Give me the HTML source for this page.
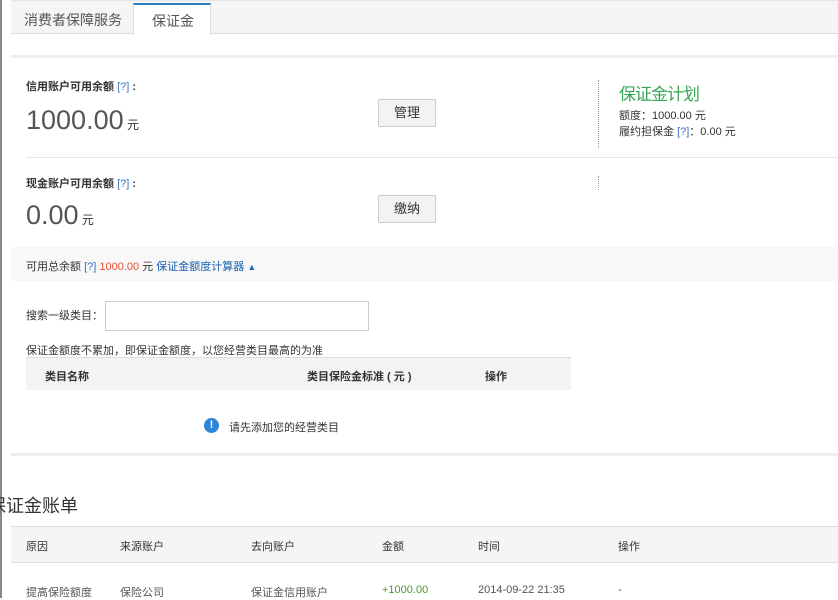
<!DOCTYPE html>
<html><head><meta charset="utf-8"><style>
*{margin:0;padding:0;box-sizing:border-box}
body{width:838px;height:598px;overflow:hidden;background:#fff;font-family:"Liberation Sans","Noto Sans CJK SC",sans-serif;font-size:12px;color:#333;position:relative}
.a{position:absolute;white-space:nowrap}
.q{color:#3a6fc4}
.btn{position:absolute;width:58px;height:28px;border:1px solid #ccc;background:#f3f3f3;border-radius:2px;text-align:center;line-height:26px;font-size:13px;color:#333}
.lbl{font-weight:bold;font-size:11px}
</style></head><body>
<div class="a" style="left:0;top:0;width:2px;height:598px;background:#888"></div>
<div class="a" style="left:11px;top:0;width:827px;height:34px;background:#f5f5f5;border-bottom:1px solid #ddd;border-top:1px solid #e5e5e5"></div>
<div class="a" style="left:24px;top:10px;font-size:14px;color:#555">消费者保障服务</div>
<div class="a" style="left:133px;top:3px;width:78px;height:32px;background:#fff;border-top:2px solid #2d7fc1;border-left:1px solid #ddd;border-right:1px solid #ddd"></div>
<div class="a" style="left:152px;top:11px;font-size:14px;color:#555">保证金</div>
<div class="a" style="left:11px;top:55px;width:827px;height:3px;background:#eee"></div>

<div class="a lbl" style="left:26px;top:78px">信用账户可用余额 <span class="q" style="font-weight:normal">[?]</span> :</div>
<div class="a" style="left:26px;top:105px;font-size:27px;color:#555">1000.00<span style="font-size:12px;color:#333"> 元</span></div>
<div class="btn" style="left:378px;top:99px">管理</div>
<div class="a" style="left:598px;top:80px;height:68px;border-left:1px dotted #999"></div>
<div class="a" style="left:619px;top:80px;font-size:17px;color:#3aa655;letter-spacing:-1px">保证金计划</div>
<div class="a" style="left:619px;top:107px;font-size:11px">额度：1000.00 元</div>
<div class="a" style="left:619px;top:123px;font-size:11px">履约担保金 <span class="q">[?]</span>：0.00 元</div>
<div class="a" style="left:26px;top:157px;width:812px;height:1px;background:#e5e5e5"></div>

<div class="a lbl" style="left:26px;top:175px">现金账户可用余额 <span class="q" style="font-weight:normal">[?]</span> :</div>
<div class="a" style="left:26px;top:200px;font-size:27px;color:#555">0.00<span style="font-size:12px;color:#333"> 元</span></div>
<div class="btn" style="left:378px;top:195px">缴纳</div>
<div class="a" style="left:598px;top:176px;height:14px;border-left:1px dotted #999"></div>

<div class="a" style="left:11px;top:247px;width:827px;height:34px;background:#f8f8f8"></div>
<div class="a" style="left:26px;top:258px;font-size:11px">可用总余额 <span class="q">[?]</span> <span style="color:#e4512f">1000.00</span> 元 <span style="color:#1a5fb4">保证金额度计算器</span> <span style="color:#1a6fc4;font-size:9px">▲</span></div>

<div class="a" style="left:26px;top:307px;font-size:11px">搜索一级类目：</div>
<div class="a" style="left:105px;top:301px;width:264px;height:30px;border:1px solid #ccc"></div>
<div class="a" style="left:26px;top:342px;font-size:11px">保证金额度不累加，即保证金额度，以您经营类目最高的为准</div>
<div class="a" style="left:26px;top:357px;width:545px;height:33px;background:#f3f3f3;border-top:1px solid #ddd"></div>
<div class="a lbl" style="left:45px;top:368px">类目名称</div>
<div class="a lbl" style="left:307px;top:368px">类目保险金标准 ( 元 )</div>
<div class="a lbl" style="left:485px;top:368px">操作</div>
<div class="a" style="left:204px;top:418px;width:15px;height:15px;border-radius:50%;background:#2b86d8;color:#fff;font-size:11px;font-weight:bold;text-align:center;line-height:15px">!</div>
<div class="a" style="left:229px;top:419px;font-size:11px">请先添加您的经营类目</div>
<div class="a" style="left:11px;top:453px;width:827px;height:3px;background:#eee"></div>

<div class="a" style="left:-12px;top:492px;font-size:18px;color:#333">保证金账单</div>
<div class="a" style="left:11px;top:526px;width:827px;height:37px;background:#f5f5f5;border-top:1px solid #ddd;border-bottom:1px solid #ddd"></div>
<div class="a" style="left:26px;top:538px;font-size:11px">原因</div>
<div class="a" style="left:120px;top:538px;font-size:11px">来源账户</div>
<div class="a" style="left:251px;top:538px;font-size:11px">去向账户</div>
<div class="a" style="left:382px;top:538px;font-size:11px">金额</div>
<div class="a" style="left:478px;top:538px;font-size:11px">时间</div>
<div class="a" style="left:618px;top:538px;font-size:11px">操作</div>
<div class="a" style="left:26px;top:584px;font-size:11px;color:#555">提高保险额度</div>
<div class="a" style="left:120px;top:584px;font-size:11px;color:#555">保险公司</div>
<div class="a" style="left:251px;top:584px;font-size:11px;color:#555">保证金信用账户</div>
<div class="a" style="left:382px;top:584px;font-size:11px;color:#4a9a2a">+1000.00</div>
<div class="a" style="left:478px;top:584px;font-size:11px;color:#555">2014-09-22 21:35</div>
<div class="a" style="left:618px;top:584px;font-size:11px;color:#555">-</div>
</body></html>
